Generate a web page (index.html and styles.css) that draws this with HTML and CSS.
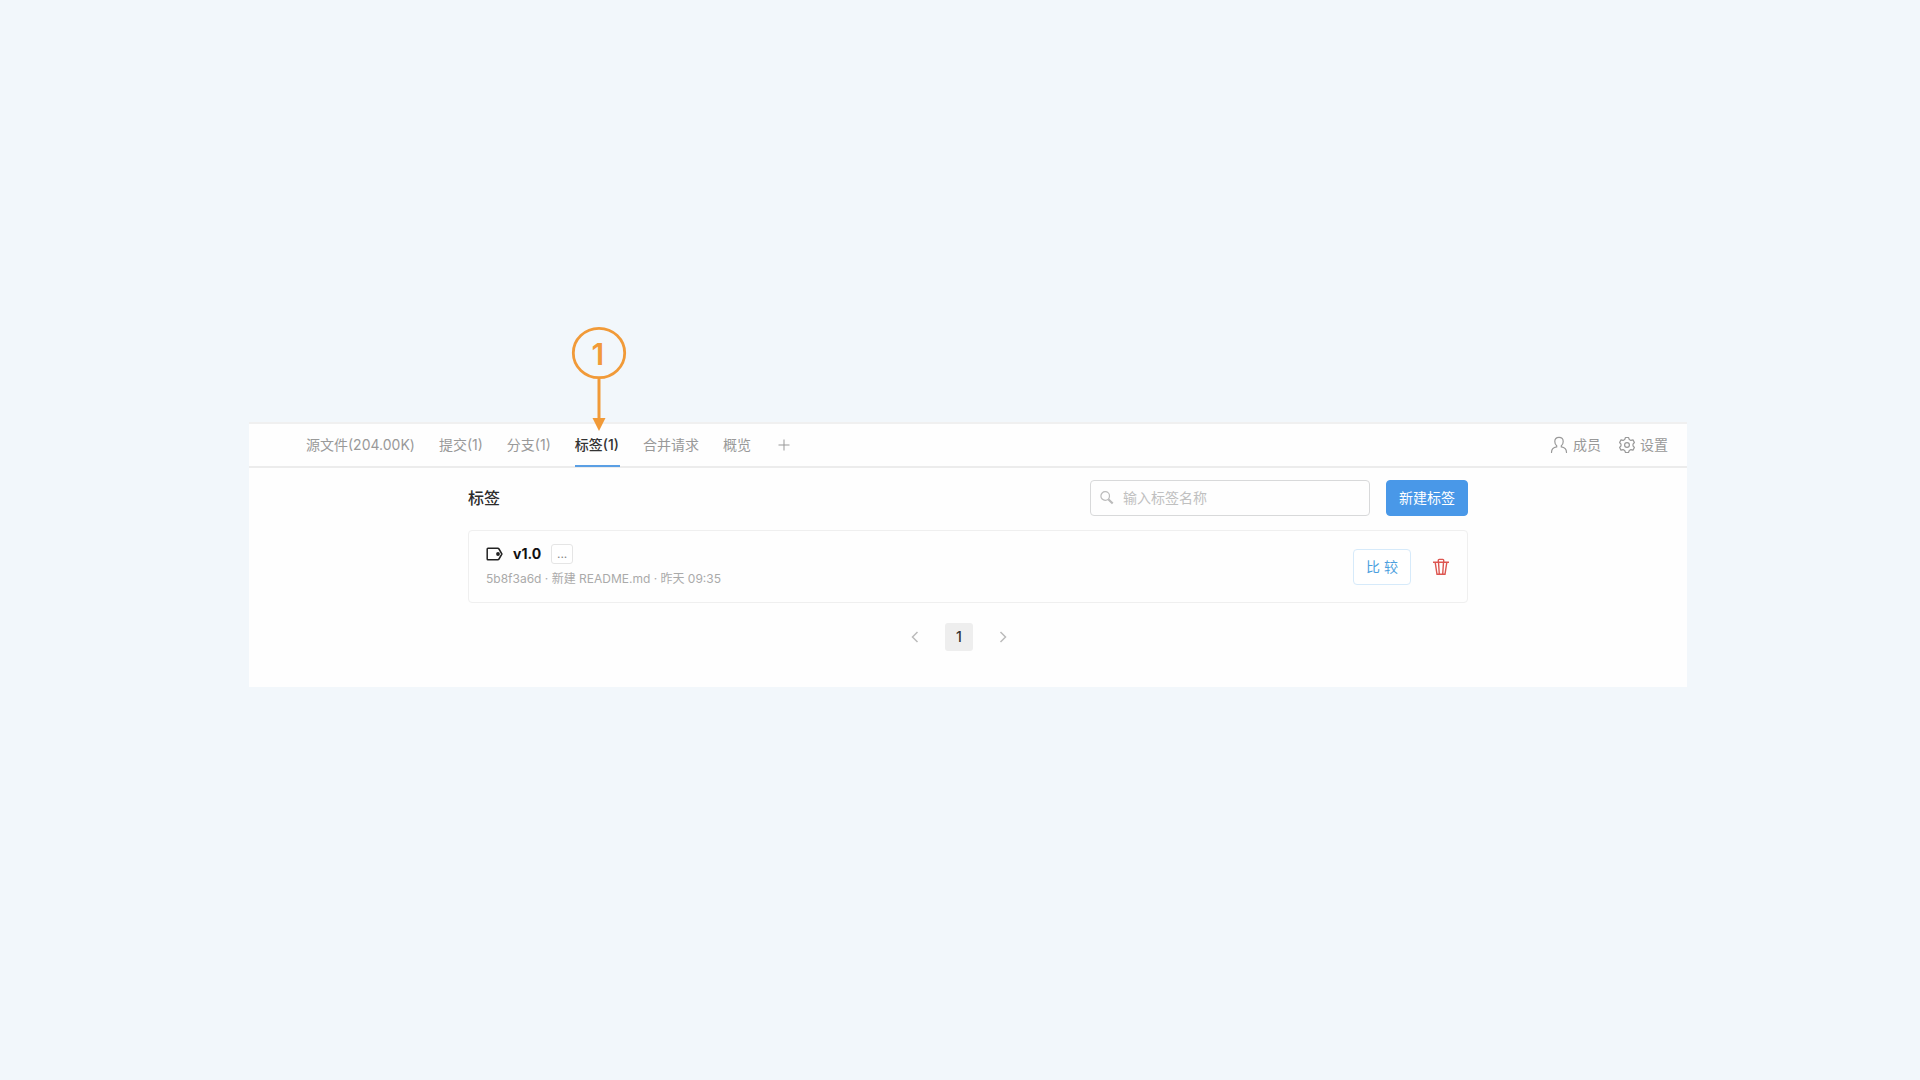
FILE: index.html
```html
<!DOCTYPE html>
<html lang="zh-CN">
<head>
<meta charset="utf-8">
<meta name="viewport" content="width=device-width, initial-scale=1">
<title>标签</title>
<link rel="stylesheet" href="styles.css">
</head>
<body>
<main class="panel">
  <nav class="navbar">
    <div class="tabs">
      <a class="tab" href="#files">源文件(204.00K)</a>
      <a class="tab" href="#commits">提交(1)</a>
      <a class="tab" href="#branches">分支(1)</a>
      <a class="tab tab-active" href="#tags">标签(1)
        <svg class="callout" viewBox="0 0 56 106" aria-hidden="true">
          <ellipse cx="28" cy="27" rx="25.7" ry="24.7" fill="none" stroke="#f19a38" stroke-width="2.8"/>
          <path d="M28 53v41" stroke="#f19a38" stroke-width="3"/>
          <path d="M21.5 92h13L28 105z" fill="#f19a38"/>
        </svg>
        <span class="callout-number">1</span>
      </a>
      <a class="tab" href="#merges">合并请求</a>
      <a class="tab" href="#overview">概览</a>
      <button class="icon-button add-tab" aria-label="添加">
        <svg width="12" height="12" viewBox="0 0 12 12" fill="none" stroke="currentColor"><path d="M6 .5v11M.5 6h11"/></svg>
      </button>
    </div>
    <div class="tools">
      <a class="tool" href="#members">
        <svg width="18" height="18" viewBox="0 0 18 18" fill="none" stroke="currentColor" stroke-width="1.2" stroke-linecap="round" stroke-linejoin="round"><path d="M1.500 16.500c0-3.300 1.800-5.100 5.200-5.600V9.800C5.300 8.700 4.800 7 4.800 5.400 4.800 2.800 6.500 1.300 9 1.300s4.200 1.500 4.200 4.100c0 1.600-.5 3.300-1.900 4.400v1.100c3.400.5 5.200 2.300 5.200 5.600"/></svg>
        成员</a>
      <a class="tool" href="#settings">
        <svg width="16" height="18" viewBox="1 0 16 18" fill="none" stroke="currentColor" stroke-width="1.200" stroke-linejoin="round"><path d="M7.500 1.500h3l.8 2 1.600.9 2.100-.5 1.400 2.600-1.400 1.600v1.800l1.400 1.600-1.400 2.600-2.100-.5-1.600.9-.8 2h-3l-.8-2-1.600-.9-2.100.5-1.400-2.600L3 9.900V8.100L1.600 6.500 3 3.900l2.100.5 1.600-.9z"/><circle cx="9" cy="9" r="2.400"/></svg>
        设置</a>
    </div>
  </nav>
  <section class="content">
    <header class="toolbar">
      <h1 class="title">标签</h1>
      <label class="search">
        <svg width="14" height="14" viewBox="0 0 14 14" fill="none" stroke="currentColor"><circle cx="5.200" cy="5" r="4.300" stroke-width="1.200"/><path d="M8.300 8.200 12.700 12.500" stroke-width="2.200"/></svg>
        <input class="search-input" type="text" placeholder="输入标签名称" aria-label="输入标签名称">
      </label>
      <button class="button button-primary">新建标签</button>
    </header>
    <article class="card">
      <div class="details">
        <div class="heading">
          <svg width="17" height="14" viewBox="0 0 17 14"><path d="M2 1.300h9.700c.6 0 1 .2 1.300.7L15.900 7 13 12c-.3.5-.7.7-1.300.7H2c-.5 0-.8-.3-.8-.8V2.100c0-.5.3-.8.8-.8z" fill="none" stroke="#222" stroke-width="1.500"/><circle cx="12" cy="7" r="1.900" fill="#222"/></svg>
          <h2 class="version">v1.0</h2>
          <button class="more">...</button>
        </div>
        <p class="meta">5b8f3a6d · 新建 README.md · 昨天 09:35</p>
      </div>
      <button class="button button-outline">比 较</button>
      <button class="icon-button delete" aria-label="删除">
        <svg width="16" height="18" viewBox="0 0 16 18" fill="none" stroke="currentColor" stroke-width="1.400"><path d="M0 4.300h16M5.300 4V2.300c0-.6.300-.9.900-.9h3.600c.6 0 .9.300.9.900V4M2.200 4.300l1.800 12h8l1.800-12M5.500 4.300l.8 12M10.500 4.300l-.8 12"/></svg>
      </button>
    </article>
    <nav class="pagination">
      <button class="icon-button page-step" aria-label="上一页"><svg width="8" height="12" viewBox="0 0 8 12" fill="none" stroke="currentColor" stroke-width="1.500"><path d="M6.500 1 1.500 6l5 5"/></svg></button>
      <button class="page-number">1</button>
      <button class="icon-button page-step" aria-label="下一页"><svg width="8" height="12" viewBox="0 0 8 12" fill="none" stroke="currentColor" stroke-width="1.500"><path d="m1.500 1 5 5-5 5"/></svg></button>
    </nav>
  </section>
</main>
</body>
</html>
```
FILE: styles.css
```css
* { box-sizing: border-box; }

body {
  margin: 0;
  padding: 422px 233px 0 249px;
  background: #f2f7fb;
  color: #2c2c2c;
  font: 14px/20px Inter, "Noto Sans CJK SC", sans-serif;
}

h1, h2, p { margin: 0; }
a { color: inherit; text-decoration: none; }
button { font: inherit; cursor: pointer; }
svg { display: block; flex: none; }

.panel { background: #fefefe; padding-bottom: 36px; }

.navbar {
  display: flex;
  justify-content: space-between;
  height: 46px;
  padding: 0 19px 0 57px;
  border-top: 2px solid #f0f0f0;
  border-bottom: 2px solid #ececec;
  color: #999;
}

.tabs { display: flex; gap: 24px; }

.tab {
  position: relative;
  display: flex;
  align-items: center;
  white-space: nowrap;
}

.tab-active { color: #333; font-weight: 500; }

.tab-active::after {
  content: "";
  position: absolute;
  inset: auto -1px -1px 0;
  height: 2px;
  background: #5a9fe4;
}

.callout {
  position: absolute;
  bottom: 34px;
  left: 50%;
  width: 56px;
  height: 106px;
  margin-left: -26px;
}

.callout-number {
  position: absolute;
  bottom: 96px;
  left: 1px;
  width: 100%;
  color: #f19a38;
  font: 600 30px/32px Inter, sans-serif;
  text-align: center;
}

.icon-button {
  display: flex;
  align-items: center;
  justify-content: center;
  padding: 0;
  border: 0;
  background: none;
}

.add-tab { width: 18px; color: #999; }

.tools { display: flex; gap: 18px; }
.tool { display: flex; align-items: center; gap: 5px; }

.content {
  max-width: 1000px;
  margin: 0 auto;
  padding-top: 12px;
}

.toolbar { display: flex; align-items: center; gap: 16px; }
.title { flex: 1; font-size: 16px; font-weight: 500; }

.search {
  display: flex;
  align-items: center;
  gap: 9px;
  width: 280px;
  height: 36px;
  padding: 0 9px;
  border: 1px solid #d8d9da;
  border-radius: 4px;
  color: #bbb;
}

.search-input {
  flex: 1;
  min-width: 0;
  padding: 0;
  border: 0;
  outline: 0;
  background: none;
  color: #333;
  font: inherit;
}

.search-input::placeholder { color: #c0c0c0; opacity: 1; }

.button {
  height: 36px;
  padding: 0 12px;
  border: 1px solid;
  border-radius: 4px;
  white-space: nowrap;
}

.button-primary { border-color: #4998e8; background: #4998e8; color: #fff; }
.button-outline { border-color: #d6eafa; background: #fff; color: #4d9fde; }

.card {
  display: flex;
  align-items: center;
  margin-top: 14px;
  padding: 13px 18px 13px 17px;
  border: 1px solid #efefef;
  border-radius: 4px;
}

.details { flex: 1; }
.heading { display: flex; align-items: center; }

.version {
  margin: 0 10px;
  color: #111;
  font-size: 14px;
  line-height: 20px;
}

.more {
  width: 22px;
  height: 20px;
  padding: 0;
  border: 1px solid #e5e5e5;
  border-radius: 3px;
  background: #fff;
  color: #888;
  font-size: 12px;
  line-height: 16px;
}

.meta { margin-top: 5px; color: #aaa; font-size: 12px; }
.delete { width: 16px; margin-left: 22px; color: #dd5550; }

.pagination {
  display: flex;
  align-items: center;
  justify-content: center;
  gap: 16px;
  margin: 20px 18px 0 0;
}

.page-step { width: 28px; height: 28px; color: #bbb; }

.page-number {
  width: 28px;
  height: 28px;
  padding: 0;
  border: 0;
  border-radius: 3px;
  background: #eee;
  color: #333;
  font-weight: 500;
}
```
